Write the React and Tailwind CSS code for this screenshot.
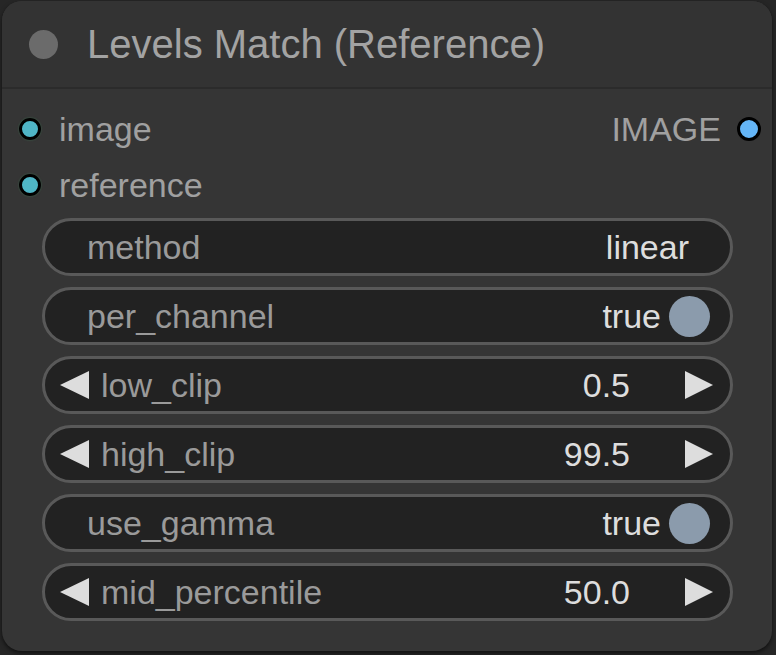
import React from "react";

const font = { fontFamily: '"Liberation Sans", Arial, sans-serif' };

function Slot({ label }) {
  return (
    <div className="flex h-[56px] items-center">
      <span className="ml-[17px] h-[22px] w-[22px] rounded-full border-[3px] border-black bg-[#4fb5c6] shadow-[0_0_2px_#3d6b50]" />
      <span className="ml-[18px] text-[34px] leading-none text-[#a0a0a0]">{label}</span>
    </div>
  );
}

function Pill({ children }) {
  return (
    <div className="flex h-[58px] items-center rounded-full border-[3px] border-[#595959] bg-[#222222]">
      {children}
    </div>
  );
}

function ComboWidget({ label, value }) {
  return (
    <Pill>
      <span className="ml-[42px] text-[34px] leading-none text-[#9a9a9a]">{label}</span>
      <span className="ml-auto mr-[41px] text-[34px] leading-none text-[#dddddd]">{value}</span>
    </Pill>
  );
}

function ToggleWidget({ label, value }) {
  return (
    <Pill>
      <span className="ml-[42px] text-[34px] leading-none text-[#9a9a9a]">{label}</span>
      <span className="ml-auto text-[34px] leading-none text-[#dddddd]">{value}</span>
      <span className="ml-[8px] mr-[20px] h-[41px] w-[41px] rounded-full bg-[#8b9bac]" />
    </Pill>
  );
}

function NumberWidget({ label, value }) {
  return (
    <Pill>
      <svg className="ml-[15px]" width="30" height="28" viewBox="0 0 30 28">
        <polygon points="29,0 29,28 0,14" fill="#dddddd" />
      </svg>
      <span className="ml-[11px] text-[34px] leading-none text-[#9a9a9a]">{label}</span>
      <span className="ml-auto text-[34px] leading-none text-[#dddddd]">{value}</span>
      <svg className="ml-[54px] mr-[16px]" width="30" height="28" viewBox="0 0 30 28">
        <polygon points="1,0 1,28 29,14" fill="#dddddd" />
      </svg>
    </Pill>
  );
}

export default function App() {
  return (
    <div className="h-[655px] w-[776px] bg-[#262626] pl-[2px] pt-[1px]" style={font}>
      <div className="flex h-[650px] w-[770px] flex-col overflow-hidden rounded-[20px] bg-[#353535] shadow-[0_2px_4px_rgba(0,0,0,0.6)]">
        {/* header */}
        <div className="flex h-[88px] items-center border-b-2 border-[#2b2b2b] bg-[#333333]">
          <span className="ml-[27px] h-[29px] w-[29px] rounded-full bg-[#6b6b6b]" />
          <span className="ml-[29px] text-[40px] leading-none text-[#a3a3a3]">Levels Match (Reference)</span>
        </div>

        {/* slots */}
        <div className="pt-[12px]">
          <div className="flex items-center justify-between">
            <Slot label="image" />
            <div className="flex items-center">
              <span className="text-[34px] leading-none text-[#a0a0a0]">IMAGE</span>
              <span className="ml-[16px] mr-[11px] h-[24px] w-[24px] rounded-full border-[3px] border-black bg-[#64b5f6]" />
            </div>
          </div>
          <Slot label="reference" />
        </div>

        {/* widgets */}
        <div className="ml-[40px] mr-[39px] mt-[5px] flex flex-col gap-[11px]">
          <ComboWidget label="method" value="linear" />
          <ToggleWidget label="per_channel" value="true" />
          <NumberWidget label="low_clip" value="0.5" />
          <NumberWidget label="high_clip" value="99.5" />
          <ToggleWidget label="use_gamma" value="true" />
          <NumberWidget label="mid_percentile" value="50.0" />
        </div>
      </div>
    </div>
  );
}
